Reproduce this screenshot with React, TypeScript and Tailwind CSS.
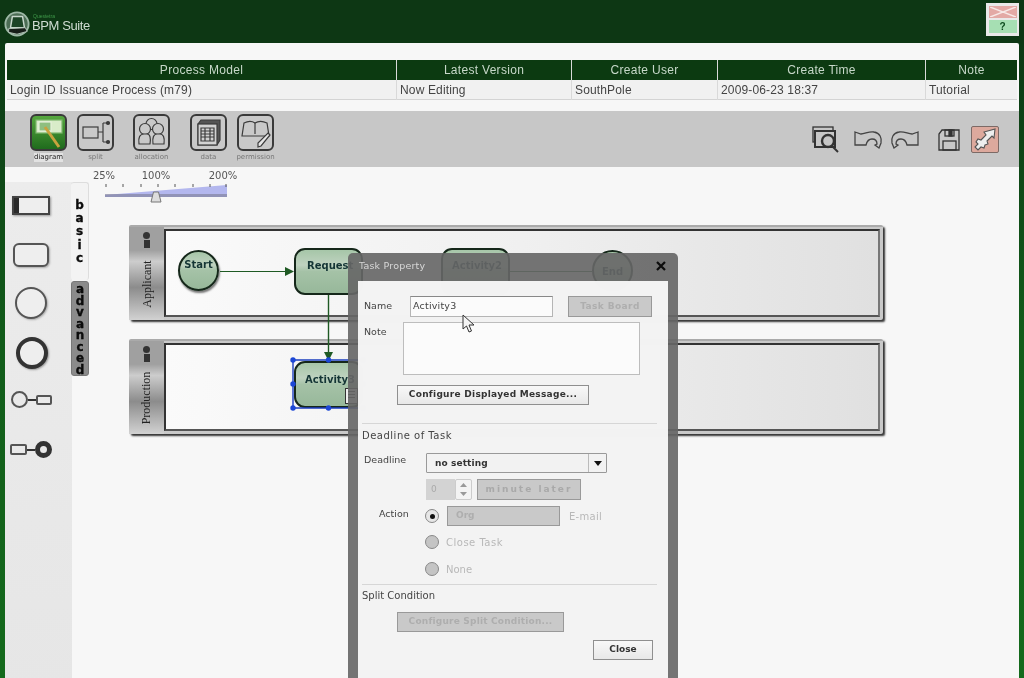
import React from "react";

const sans = "[font-family:'Liberation_Sans',Arial,sans-serif]";
const dv = "[font-family:'DejaVu_Sans',Verdana,sans-serif]";

function Logo() {
  return (
    <svg width="26" height="26" viewBox="0 0 28 28" fill="none">
      <circle cx="14" cy="14" r="12.500" fill="#4c6d55" stroke="#9db8a6" strokeWidth="2" />
      <path d="M9 6h11l2 12H7z" fill="#1c4426" stroke="#c7d6cb" strokeWidth="1.600" />
      <path d="M5 19l18-1 2 4-11 3-9-2z" fill="#161d18" stroke="#b9c9bd" strokeWidth="1" />
    </svg>
  );
}

function ToolFrame({ active, label, children, className }: { active?: boolean; label: string; children: React.ReactNode; className: string }) {
  return (
    <div className={`flex flex-col items-center ${className}`}>
      <div className={`w-[37px] h-[37px] rounded-[6px] border-[2px] border-[#3a3a3a] overflow-hidden ${active ? "bg-gradient-to-b from-[#56a83f] to-[#1f6b1d]" : "bg-[#c9c9c9]"}`}>
        <svg width="33" height="33" viewBox="0 0 33 33" fill="none" stroke="#3c3c3c" strokeWidth="1.2">{children}</svg>
      </div>
      <span className={`mt-[2px] text-[7px] leading-[9px] whitespace-nowrap ${dv} ${active ? "text-[#222] bg-[#eeeeee]/70" : "text-[#777]"}`}>{label}</span>
    </div>
  );
}

function Toolbar() {
  return (
    <div className="h-[56px] bg-[#c7c7c7] flex items-start pt-[3px] mt-[11px]">
      <ToolFrame active label="diagram" className="ml-[25px] w-[37px]">
        <rect x="4" y="4" width="26" height="13" fill="#d9ecc9" stroke="#7db66d" />
        <rect x="7" y="6" width="12" height="9" fill="#8fbf80" stroke="#e6f0dc" />
        <path d="M13 11l14 20" stroke="#c9a23e" strokeWidth="3" />
      </ToolFrame>
      <ToolFrame label="split" className="ml-[10px] w-[37px]">
        <rect x="4" y="11" width="15" height="11" />
        <path d="M19 16h5M24 7v19M24 7h4M24 26h4" />
        <circle cx="29" cy="7" r="1.5" fill="#3c3c3c" />
        <circle cx="29" cy="26" r="1.5" fill="#3c3c3c" />
      </ToolFrame>
      <ToolFrame label="allocation" className="ml-[19px] w-[37px]">
        <circle cx="16.5" cy="8" r="5.5" />
        <circle cx="10" cy="13" r="5.5" fill="#c9c9c9" />
        <circle cx="23" cy="13" r="5.5" fill="#c9c9c9" />
        <path d="M4 28c-1-7 1-10 5-10h3c3 0 4 4 3 10zM18 28c-1-7 1-10 4-10h3c3 0 5 3 4 10z" fill="#c9c9c9" />
      </ToolFrame>
      <ToolFrame label="data" className="ml-[20px] w-[37px]">
        <path d="M6 8l3-4h19v20l-3 5H6z" fill="#555" />
        <rect x="6" y="8" width="19" height="21" fill="#d2d2d2" />
        <path d="M9 12h13v13H9zM9 15h13M9 18h13M9 21h13M13 12v13M18 12v13" />
      </ToolFrame>
      <ToolFrame label="permission" className="ml-[10px] w-[37px]">
        <path d="M5 7c4-2 8-2 11 0 3-2 8-2 12 0l2 13H3z" />
        <path d="M16 7v11" />
        <path d="M29 17l2 2-9 11-3 1 0-4z" fill="#e6e6e6" />
      </ToolFrame>
      <div className="ml-auto flex items-center pt-[12px] mr-[20px]">
        <svg width="28" height="27" viewBox="0 0 28 27" fill="none" stroke="#333" strokeWidth="1.3">
          <rect x="1" y="1" width="20" height="15" />
          <rect x="3" y="5" width="20" height="16" fill="#c7c7c7" strokeWidth="2" />
          <circle cx="16" cy="15" r="6" fill="#c7c7c7" strokeWidth="2.4" />
          <path d="M20 20l6 6" strokeWidth="2" />
        </svg>
        <svg className="ml-[14px]" width="29" height="24" viewBox="0 0 29 24" fill="none" stroke="#444" strokeWidth="1.3">
          <path d="M1 4l6 2c4 0 8-3 13-2 6 1 8 6 7 11l-2 5-4-3 2-1c0-4-2-5-5-5-3 0-5 2-6 6H1z" />
        </svg>
        <svg className="ml-[7px] -scale-x-100" width="29" height="24" viewBox="0 0 29 24" fill="none" stroke="#444" strokeWidth="1.3">
          <path d="M1 4l6 2c4 0 8-3 13-2 6 1 8 6 7 11l-2 5-4-3 2-1c0-4-2-5-5-5-3 0-5 2-6 6H1z" />
        </svg>
        <svg className="ml-[19px]" width="22" height="22" viewBox="0 0 22 22" fill="none" stroke="#333" strokeWidth="1.3">
          <path d="M4 1h17v20H1V5z" />
          <rect x="7" y="1" width="9" height="6" />
          <rect x="11" y="1" width="3" height="6" fill="#333" />
          <rect x="5" y="12" width="13" height="9" />
        </svg>
        <div className="ml-[11px] w-[28px] h-[27px] bg-[#dda99d] border border-[#7c6a66] rounded-[2px]">
          <svg width="26" height="25" viewBox="0 0 26 25" fill="#eee" stroke="#555" strokeWidth="1.1">
            <path d="M23 2l-1 9-2-2-5 5 1 3-3 1-1 3-3-1-3 3-3-3 3-3-2-2 2-3 3 1 5-5-2-3z" />
          </svg>
        </div>
      </div>
    </div>
  );
}

function Palette() {
  return (
    <div className="absolute left-0 top-[15px] w-[67px] h-[511px] bg-gradient-to-b from-[#ececec] to-[#e6e6e6] flex flex-col items-center">
      <div className="mt-[14px] mr-[15px] w-[38px] h-[19px] border-[2px] border-[#444] bg-[#eee] flex shadow-[1px_1px_2px_#999]">
        <div className="w-[5px] bg-[#2b2b2b]" />
      </div>
      <div className="mt-[28px] mr-[15px] w-[36px] h-[24px] rounded-[6px] border-[2px] border-[#555] bg-[#eee] shadow-[1px_1px_2px_#aaa]" />
      <div className="mt-[20px] mr-[15px] w-[32px] h-[32px] rounded-full border-[2px] border-[#555] bg-[#eee] shadow-[1px_1px_2px_#aaa]" />
      <div className="mt-[18px] mr-[13px] w-[32px] h-[32px] rounded-full border-[4px] border-[#333] bg-[#eee] shadow-[1px_1px_2px_#999]" />
      <div className="mt-[22px] mr-[15px] flex items-center">
        <div className="w-[17px] h-[17px] rounded-full border-[2px] border-[#555]" />
        <div className="w-[8px] h-[2px] bg-[#333]" />
        <div className="w-[16px] h-[10px] rounded-[2px] border-[2px] border-[#555]" />
      </div>
      <div className="mt-[33px] mr-[16px] flex items-center">
        <div className="w-[17px] h-[11px] rounded-[2px] border-[2px] border-[#555]" />
        <div className="w-[8px] h-[2px] bg-[#333]" />
        <div className="w-[17px] h-[17px] rounded-full border-[5px] border-[#333]" />
      </div>
    </div>
  );
}

function VTab({ text, dark, className }: { text: string; dark?: boolean; className: string }) {
  return (
    <div className={`absolute left-[66px] w-[18px] rounded-[3px] flex justify-center ${dv} font-bold text-[12px] [-webkit-text-stroke:0.3px_#000] text-[#0c0c0c] ${dark ? "bg-[#8b8b8b] border border-[#777] pt-[2px] leading-[11.500px]" : "bg-[#f3f3f3] border-r border-t border-[#ddd] pt-[16px] leading-[13.200px]"} ${className}`}>
      <span className="block w-[10px] break-all text-center">{text}</span>
    </div>
  );
}

function Slider() {
  return (
    <div className="absolute left-[100px] top-[3px] w-[130px] h-[36px]">
      <div className={`relative h-[12px] ${dv} text-[10px] leading-[12px] text-[#555]`}>
        <span className="absolute left-[-26px] w-[50px] text-center">25%</span>
        <span className="absolute left-[26px] w-[50px] text-center">100%</span>
        <span className="absolute left-[93px] w-[50px] text-center">200%</span>
      </div>
      <svg className="absolute left-0 top-[12px]" width="130" height="22" viewBox="0 0 130 22">
        <path d="M0 13L122 3v12H0z" fill="#b3b7ee" />
        <path d="M0 12h122v3H0z" fill="#7f7f9a" opacity=".65" />
        <path d="M1 2v3M18 2v3M36 2v3M53 2v3M70 2v3M88 2v3M105 2v3M121 2v3" stroke="#555" />
        <path d="M46 20l2.500-10h5L56 20z" fill="#ddd" stroke="#777" />
      </svg>
    </div>
  );
}

function Lane({ top, label }: { top: number; label: string }) {
  return (
    <div style={{ top }} className="absolute left-[124px] w-[754px] h-[95px] bg-[#c9c9c9] border-t-[2px] border-[#aaa] rounded-[2px] shadow-[2px_2px_2px_#333] flex">
      <div className="w-[35px] h-full bg-[linear-gradient(180deg,#a0a0a0_0%,#a0a0a0_25%,#cdcdcd_37%,#8c8c8c_65%,#d2d2d2_100%)] flex flex-col items-center pt-[5px]">
        <div className="w-[7px] h-[7px] rounded-full bg-[#333]" />
        <div className="w-[6px] h-[8px] bg-[#333] mt-[1px]" />
        <div className="flex-1 flex items-center justify-center">
          <span className="[font-family:'Liberation_Serif',serif] text-[12px] text-[#222] -rotate-90 whitespace-nowrap">{label}</span>
        </div>
      </div>
      <div className="flex-1 mt-[2px] mb-[3px] mr-[3px] border-[2px] border-[#333] border-r-[#777] border-b-[#555] bg-gradient-to-r from-[#fafafa] via-[#f0f0f0] to-[#e0e0e0]" />
    </div>
  );
}

const nodeBg = "bg-[linear-gradient(180deg,#a6c6a8_0%,#bfd2c0_35%,#a5c2a7_50%,#97b89a_100%)]";

function Diagram() {
  return (
    <>
      <Lane top={58} label="Applicant" />
      <Lane top={172} label="Production" />
      <div className={`absolute left-[173px] top-[83px] w-[41px] h-[41px] rounded-full border-[2px] border-[#15271a] ${nodeBg} shadow-[1px_2px_2px_#777] flex justify-center pt-[5px] text-[10px] font-bold text-[#143535] ${dv}`}>Start</div>
      <div className={`absolute left-[289px] top-[81px] w-[69px] h-[47px] rounded-[11px] border-[2px] border-[#15271a] ${nodeBg} pt-[8px] pl-[11px] text-[10px] font-bold text-[#143535] ${dv}`}>Request</div>
      <div className={`absolute left-[436px] top-[81px] w-[69px] h-[47px] rounded-[11px] border-[2px] border-[#15271a] ${nodeBg} pt-[8px] pl-[9px] text-[10px] font-bold text-[#143535] ${dv}`}>Activity2</div>
      <div className={`absolute left-[587px] top-[83px] w-[41px] h-[41px] rounded-full border-[2px] border-[#15271a] ${nodeBg} flex justify-center pt-[12px] text-[10px] font-bold text-[#143535] ${dv}`}>End</div>
      <div className={`absolute left-[289px] top-[194px] w-[69px] h-[47px] rounded-[11px] border-[2px] border-[#15271a] ${nodeBg} pt-[9px] pl-[9px] text-[10px] font-bold text-[#143535] ${dv}`}>
        Activity3
        <div className="absolute right-[3px] bottom-[2px] w-[13px] h-[16px] bg-[#eee] border border-[#333] flex flex-col gap-[2px] p-[2px]">
          <div className="h-[1px] bg-[#333]" />
          <div className="h-[1px] bg-[#333]" />
          <div className="h-[1px] bg-[#333]" />
        </div>
      </div>
      <svg className="absolute left-0 top-0 pointer-events-none" width="900" height="300" fill="none">
        <path d="M215 104.500H281" stroke="#1f5a24" strokeWidth="1.2" />
        <path d="M280 100l9 4.500-9 4.500z" fill="#1f5a24" />
        <path d="M323.500 128V186" stroke="#1f5a24" strokeWidth="1.4" />
        <path d="M319 185l4.500 9 4.500-9z" fill="#1f5a24" />
        <path d="M505 104.500H587" stroke="#1f5a24" strokeWidth="1.2" />
        <path d="M288 193h70M288 193v48h70" stroke="#1d3fbf" strokeWidth="1.4" />
        {[[288, 193], [323.500, 193], [358, 193], [288, 217], [358, 217], [288, 241], [323.500, 241], [358, 241]].map(([x, y], i) => (
          <circle key={i} cx={x} cy={y} r="2.700" fill="#1c47d6" />
        ))}
      </svg>
    </>
  );
}

function Btn({ children, disabled, className = "" }: { children: React.ReactNode; disabled?: boolean; className?: string }) {
  return (
    <div className={`h-[20px] flex items-center justify-center border text-[9px] font-bold ${dv} ${disabled ? "bg-[#c9c9c9] border-[#999] text-[#aeaeae]" : "bg-gradient-to-b from-[#f8f8f8] to-[#e8e8e8] border-[#8f8f8f] text-[#333]"} ${className}`}>
      {children}
    </div>
  );
}

function Radio({ on }: { on?: boolean }) {
  return (
    <div className={`w-[14px] h-[14px] rounded-full border border-[#888] flex items-center justify-center ${on ? "bg-[#e6e6e6]" : "bg-[#c4c4c4]"}`}>
      {on && <div className="w-[5px] h-[5px] rounded-full bg-[#111]" />}
    </div>
  );
}

function Dialog() {
  return (
    <div className={`absolute left-[348px] top-[253px] w-[330px] h-[440px] rounded-[5px] bg-[#666666]/[0.91] px-[10px] ${dv} text-[9.500px] text-[#444]`}>
      <div className="h-[28px] flex items-center justify-between pr-[2px] pb-[2px]">
        <span className="text-[#d8d8d8] text-[9.500px] pl-[1px] tracking-[0.2px]">Task Property</span>
        <svg width="10" height="10" viewBox="0 0 10 10" stroke="#0c0c0c" strokeWidth="2.200"><path d="M1 1l8 8M9 1l-8 8" /></svg>
      </div>
      <div className="h-[412px] bg-[#f7f7f7]/[0.97] pl-[4px] pr-[11px] pt-[15px]">
        <div className="flex items-center h-[21px]">
          <span className="ml-[2px] w-[46px]">Name</span>
          <div className="w-[143px] h-[21px] bg-[#fbfbfb] border border-[#b5b5b5] border-t-[#888] flex items-center pl-[2px] text-[9.500px] tracking-[0.2px]">Activity3</div>
          <Btn disabled className="ml-[15px] w-[84px] !h-[21px] tracking-[0.4px]">Task Board</Btn>
        </div>
        <div className="flex mt-[5px] h-[53px]">
          <span className="ml-[2px] w-[39px] pt-[3px]">Note</span>
          <div className="w-[237px] h-[53px] bg-[#fbfbfb] border border-[#bdbdbd]" />
        </div>
        <Btn className="ml-[35px] mt-[10px] w-[192px] tracking-[0.27px]">Configure Displayed Message...</Btn>
        <div className="mt-[18px] h-[1px] bg-[#d6d6d6]" />
        <div className="mt-[6px] leading-[12px] text-[10px] tracking-[0.5px] text-[#444]">Deadline of Task</div>
        <div className="flex items-center mt-[11px] h-[20px]">
          <span className="ml-[2px] w-[62px] -mt-[6px]">Deadline</span>
          <div className="w-[181px] h-[20px] bg-[#f2f2f2] border border-[#999] flex items-center pl-[8px] font-bold text-[9px] text-[#333] rounded-[1px]">
            <span className="flex-1 mt-[2px] tracking-[0.1px]">no setting</span>
            <div className="w-[18px] h-full border-l border-[#bbb] flex items-center justify-center">
              <svg width="8" height="5" viewBox="0 0 8 5"><path d="M0 0h8L4 5z" fill="#111" /></svg>
            </div>
          </div>
        </div>
        <div className="flex mt-[6px] h-[21px] ml-[64px]">
          <div className="w-[29px] bg-[#d3d3d3] text-[#aaa] text-[9px] pl-[5px] flex items-center">0</div>
          <div className="w-[17px] border border-[#ccc] rounded-[2px] flex flex-col items-center justify-around">
            <svg width="7" height="4" viewBox="0 0 7 4"><path d="M0 4h7L3.500 0z" fill="#999" /></svg>
            <svg width="7" height="4" viewBox="0 0 7 4"><path d="M0 0h7L3.500 4z" fill="#999" /></svg>
          </div>
          <Btn disabled className="ml-[5px] w-[104px] !h-[21px] tracking-[2px] !text-[#a9a9a9]">minute later</Btn>
        </div>
        <div className="flex items-center mt-[6px] h-[20px]">
          <span className="ml-[17px] w-[46px] -mt-[4px]">Action</span>
          <Radio on />
          <Btn disabled className="ml-[8px] w-[113px] !justify-start pl-[8px]">Org</Btn>
          <span className="ml-[9px] text-[#b8b8b8] text-[10px] tracking-[0.3px]">E-mail</span>
        </div>
        <div className="flex items-center mt-[9px] h-[14px] ml-[63px]">
          <Radio /><span className="ml-[7px] text-[#b8b8b8] text-[10px] tracking-[0.5px]">Close Task</span>
        </div>
        <div className="flex items-center mt-[13px] h-[14px] ml-[63px]">
          <Radio /><span className="ml-[7px] text-[#b8b8b8] text-[10px]">None</span>
        </div>
        <div className="mt-[8px] h-[1px] bg-[#d6d6d6]" />
        <div className="mt-[5px] leading-[12px] text-[10px]">Split Condition</div>
        <Btn disabled className="ml-[35px] mt-[10px] w-[167px] tracking-[0.2px]">Configure Split Condition...</Btn>
        <Btn className="ml-[231px] mt-[8px] w-[60px]">Close</Btn>
      </div>
    </div>
  );
}

export default function App() {
  const cols = [
    ["Process Model", "Login ID Issuance Process (m79)", "w-[390px]"],
    ["Latest Version", "Now Editing", "w-[175px]"],
    ["Create User", "SouthPole", "w-[146px]"],
    ["Create Time", "2009-06-23 18:37", "w-[208px]"],
    ["Note", "Tutorial", "flex-1"],
  ];
  return (
    <div className={`relative w-[1024px] h-[678px] overflow-hidden blur-[0.35px] bg-gradient-to-b from-[#0b3413] via-[#125c1a] to-[#146a1c] ${sans}`}>
      <div className="h-[43px] bg-[#0d3714] flex items-start relative">
        <div className="ml-[4px] mt-[11px]"><Logo /></div>
        <div className="ml-[2px] mt-[14px] flex flex-col">
          <span className="text-[5px] leading-[5px] text-[#3f9a4a] pl-[1px]">Questetra</span>
          <span className="text-[13px] leading-[14px] tracking-[-0.4px] text-[#cfdcd2]">BPM Suite</span>
        </div>
        <div className="ml-auto mr-[5px] mt-[3px] w-[33px] h-[33px] bg-[#e9e9e9] p-[2px] flex flex-col gap-[2px] items-center">
          <div className="w-[28px] h-[12px] mt-[1px] bg-[#e3a9a5] flex items-center justify-center">
            <svg width="26" height="10" viewBox="0 0 26 10" stroke="#f7e9e7" strokeWidth="1.500"><path d="M0 0l26 10M26 0L0 10" /></svg>
          </div>
          <div className="w-[28px] h-[13px] bg-[#a6dfb3] text-[#0c4a1d] text-[10px] leading-[13px] font-bold text-center">?</div>
        </div>
      </div>
      <div className="relative mx-[5px] h-[635px] bg-[#f7f7f7] rounded-t-[2px] pt-[17px]">
        <div className="mx-[2px] flex">
          {cols.map(([h, v, w], i) => (
            <div key={i} className={`${w} ${i < 4 ? "border-r border-[#d9d9d9]" : ""}`}>
              <div className="h-[20px] bg-[#0c3a11] text-[#c7d8c9] text-[12px] leading-[20px] tracking-[0.3px] text-center">{h}</div>
              <div className="h-[20px] bg-[#f1f1f1] border-b border-[#d4d4d4] text-[#444] text-[12px] leading-[20px] tracking-[0.15px] pl-[3px] whitespace-nowrap">{v}</div>
            </div>
          ))}
        </div>
        <Toolbar />
        <div className="relative h-[511px]">
          <Palette />
          <VTab text="basic" className="top-[15px] h-[98px]" />
          <VTab text="advanced" dark className="top-[114px] h-[95px]" />
          <Slider />
          <Diagram />
        </div>
      </div>
      <Dialog />
      <svg className="absolute left-[462px] top-[314px]" width="13" height="19" viewBox="0 0 13 19">
        <path d="M1 1v14l3.500-3 2.500 6 2.500-1-2.500-6h5z" fill="#f4f4f4" stroke="#333" strokeWidth="1" />
      </svg>
    </div>
  );
}
